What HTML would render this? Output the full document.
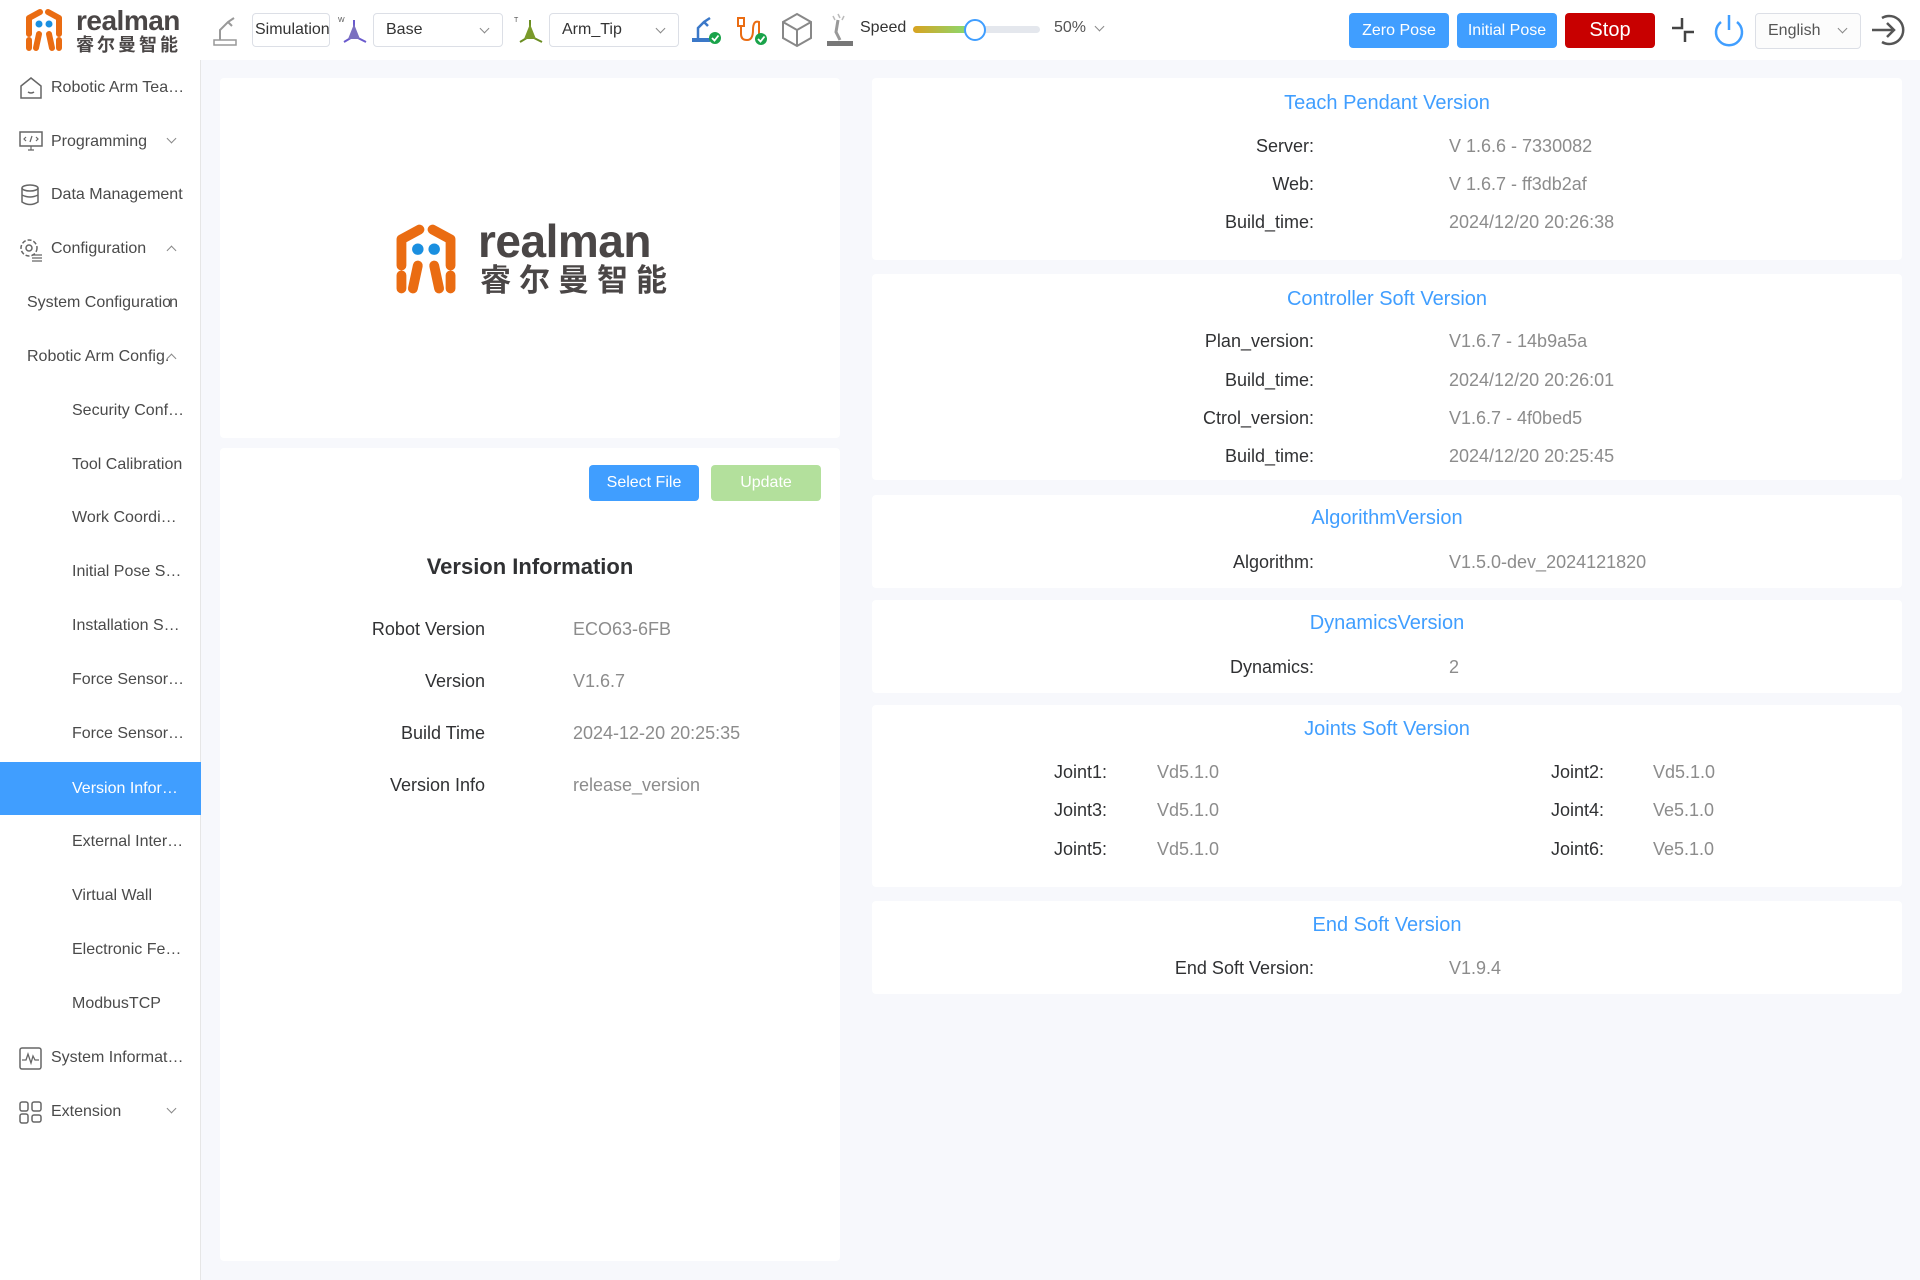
<!DOCTYPE html>
<html><head><meta charset="utf-8">
<style>
*{margin:0;padding:0;box-sizing:border-box}
body{width:1920px;height:1280px;background:#f7f8fc;font-family:"Liberation Sans","Noto Sans CJK SC",sans-serif;position:relative;overflow:hidden;color:#303133}
.a{position:absolute}
.hdr{left:0;top:0;width:1920px;height:60px;background:#fff}
.side{left:0;top:60px;width:201px;height:1220px;background:#fff;border-right:1px solid #e6e6e6}
.si{position:absolute;left:0;width:200px;height:53px;line-height:53px;font-size:16px;color:#4a4a4a;white-space:nowrap}
.card{position:absolute;background:#fff;border-radius:4px}
.t{position:absolute;left:0;right:0;text-align:center;color:#409eff;font-size:20px}
.l{position:absolute;text-align:right;font-size:18px;color:#303133;white-space:nowrap}
.v{position:absolute;font-size:18px;color:#8c8c8c;white-space:nowrap}
.btn{position:absolute;color:#fff;font-size:16px;text-align:center;border-radius:4px}
.chev{display:inline-block;width:7px;height:7px;border-right:1.3px solid #888;border-bottom:1.3px solid #888;transform:rotate(45deg)}
.chu{display:inline-block;width:7px;height:7px;border-left:1.3px solid #888;border-top:1.3px solid #888;transform:rotate(45deg)}
.sel{position:absolute;border:1px solid #dcdfe6;border-radius:4px;background:#fff;font-size:16px;color:#333;line-height:32px;padding-left:12px}
</style></head><body>
<div class="a hdr"></div>
<!-- logo -->
<svg class="a" style="left:22px;top:8px" width="44" height="44" viewBox="0 0 44 44">
<path d="M18 4 L7 10 V26 M26 4 L37 10 V26" stroke="#ea6c12" stroke-width="6" fill="none" stroke-linecap="round" stroke-linejoin="round"/>
<path d="M7 32 V40 M37 32 V40 M17 26 L14 40 M27 26 L30 40" stroke="#ea6c12" stroke-width="6" fill="none" stroke-linecap="round"/>
<circle cx="17" cy="16" r="3.5" fill="#1a8fe0"/><circle cx="27" cy="16" r="3.5" fill="#1a8fe0"/>
</svg>
<div class="a" style="left:76px;top:5px;font-size:28px;color:#4a4646;letter-spacing:-0.5px;font-weight:600">realman</div>
<div class="a" style="left:76px;top:31px;font-size:18px;font-weight:bold;color:#4a4646;letter-spacing:3px;font-family:'Noto Sans CJK SC',sans-serif">睿尔曼智能</div>
<!-- toolbar -->
<svg class="a" style="left:212px;top:14px" width="28" height="32" viewBox="0 0 28 32"><path d="M8 26 V16 L16 8 L22 4 M16 8 L20 12" stroke="#999" stroke-width="2" fill="none"/><rect x="2" y="26" width="22" height="5" fill="none" stroke="#999" stroke-width="1.5"/></svg>
<div class="sel" style="left:252px;top:13px;width:78px;height:34px;padding-left:2px;font-size:16px">Simulation</div>
<svg class="a" style="left:338px;top:14px" width="32" height="30"><text x="0" y="8" font-size="7" fill="#555">W</text><path d="M16 6 V22 L6 28 M16 22 L28 28" stroke="#6a5acd" stroke-width="2" fill="none"/><path d="M10 25 L16 10 L22 25Z" fill="#7b70c0"/></svg>
<div class="sel" style="left:373px;top:13px;width:130px;height:34px">Base<span class="chev" style="position:absolute;right:14px;top:11px"></span></div>
<svg class="a" style="left:514px;top:14px" width="32" height="30"><text x="0" y="8" font-size="7" fill="#555">T</text><path d="M16 6 V22 L6 28 M16 22 L28 28" stroke="#6b8e23" stroke-width="2" fill="none"/><path d="M10 25 L16 10 L22 25Z" fill="#7a9a2a"/></svg>
<div class="sel" style="left:549px;top:13px;width:130px;height:34px">Arm_Tip<span class="chev" style="position:absolute;right:14px;top:11px"></span></div>
<svg class="a" style="left:690px;top:14px" width="34" height="32"><path d="M8 24 V14 L14 8 L20 4 M14 8 L18 12" stroke="#3b78c8" stroke-width="2.5" fill="none"/><rect x="2" y="24" width="18" height="4" fill="#3b78c8"/><circle cx="25" cy="24" r="6" fill="#1aa34a"/><path d="M22 24 L24.5 26.5 L28.5 21.5" stroke="#fff" stroke-width="1.8" fill="none"/></svg>
<svg class="a" style="left:735px;top:14px" width="34" height="32"><path d="M3 4 H9 V12 H3Z M6 12 V20 Q6 26 12 26 Q18 26 18 16 Q18 6 24 8 V22" stroke="#ea6c12" stroke-width="2" fill="none"/><circle cx="26" cy="25" r="6" fill="#1aa34a"/><path d="M23 25 L25.5 27.5 L29.5 22.5" stroke="#fff" stroke-width="1.8" fill="none"/></svg>
<svg class="a" style="left:780px;top:12px" width="34" height="36"><path d="M17 2 L31 10 V26 L17 34 L3 26 V10Z M3 10 L17 18 L31 10 M17 18 V34" stroke="#888" stroke-width="2" fill="none"/></svg>
<svg class="a" style="left:824px;top:12px" width="32" height="36"><path d="M14 8 L12 20 L16 28" stroke="#999" stroke-width="3" fill="none"/><path d="M14 2 L16 6 M20 4 L18 8 M9 4 L11 8" stroke="#bbb" stroke-width="1.5"/><rect x="3" y="29" width="26" height="5" fill="#777"/></svg>
<div class="a" style="left:860px;top:19px;font-size:16px;color:#333">Speed</div>
<div class="a" style="left:913px;top:26px;width:127px;height:7px;border-radius:4px;background:#e4e7ed"></div>
<div class="a" style="left:913px;top:26px;width:62px;height:7px;border-radius:4px;background:linear-gradient(90deg,#d9a320,#7ee07a)"></div>
<div class="a" style="left:964px;top:19px;width:22px;height:22px;border-radius:50%;border:2px solid #409eff;background:#fff"></div>
<div class="a" style="left:1054px;top:19px;font-size:16px;color:#555">50%</div>
<span class="chev a" style="left:1096px;top:23px"></span>
<div class="btn" style="left:1349px;top:13px;width:100px;height:35px;line-height:35px;background:#409eff">Zero Pose</div>
<div class="btn" style="left:1457px;top:13px;width:100px;height:35px;line-height:35px;background:#409eff">Initial Pose</div>
<div class="btn" style="left:1565px;top:13px;width:90px;height:35px;line-height:35px;background:#c80000;font-size:20px">Stop</div>
<svg class="a" style="left:1668px;top:14px" width="30" height="32"><path d="M14 4 V14 H4 M17 28 V18 H26" stroke="#444" stroke-width="2.5" fill="none"/></svg>
<svg class="a" style="left:1711px;top:12px" width="36" height="38"><path d="M10 10 A13 13 0 1 0 26 10" stroke="#409eff" stroke-width="2.5" fill="none"/><path d="M18 3 V18" stroke="#409eff" stroke-width="2.5"/></svg>
<div class="sel" style="left:1755px;top:13px;width:106px;height:36px;line-height:34px;background:#fcfcfc;color:#555">English<span class="chev" style="position:absolute;right:14px;top:11px"></span></div>
<svg class="a" style="left:1868px;top:10px" width="40" height="40"><path d="M14 8 A14 14 0 1 1 14 32" stroke="#555" stroke-width="2.5" fill="none"/><path d="M4 20 H26 M19 13 L26 20 L19 27" stroke="#555" stroke-width="2.5" fill="none"/></svg>

<!-- sidebar -->
<div class="a side"></div>
<div class="si" style="top:61px;padding-left:51px">Robotic Arm Tea…</div>
<svg class="a" style="left:19px;top:76px" width="24" height="24"><path d="M2 10 L12 2 L22 10 V22 H2Z M9 16 Q12 18 15 16" stroke="#666" stroke-width="1.5" fill="none"/></svg>
<div class="si" style="top:115px;padding-left:51px">Programming<span class="chev" style="position:absolute;left:168px;top:20px"></span></div>
<svg class="a" style="left:19px;top:130px" width="24" height="24"><rect x="1" y="2" width="22" height="14" stroke="#666" stroke-width="1.5" fill="none"/><path d="M9 20 H15 M12 16 V20 M7 7 L5 9 L7 11 M17 7 L19 9 L17 11 M13 6 L11 12" stroke="#666" stroke-width="1.2" fill="none"/></svg>
<div class="si" style="top:168px;padding-left:51px">Data Management</div>
<svg class="a" style="left:19px;top:183px" width="24" height="24"><ellipse cx="11" cy="5" rx="8" ry="3" stroke="#666" stroke-width="1.5" fill="none"/><path d="M3 5 V19 Q11 24 19 19 V5 M3 12 Q11 16 19 12" stroke="#666" stroke-width="1.5" fill="none"/></svg>
<div class="si" style="top:222px;padding-left:51px">Configuration<span class="chu" style="position:absolute;left:168px;top:25px"></span></div>
<svg class="a" style="left:18px;top:237px" width="26" height="26"><circle cx="11" cy="11" r="8" stroke="#666" stroke-width="1.5" fill="none" stroke-dasharray="4 2"/><circle cx="11" cy="11" r="3" stroke="#666" stroke-width="1.5" fill="none"/><path d="M14 18 H24 M14 21 H24 M14 24 H24" stroke="#666" stroke-width="1.3"/></svg>
<div class="si" style="top:276px;padding-left:27px">System Configuratio<span style="margin-left:-2px">n</span></div>
<div class="si" style="top:330px;padding-left:27px">Robotic Arm Config.<span class="chu" style="position:absolute;left:168px;top:25px"></span></div>
<div class="si" style="top:384px;padding-left:72px">Security Conf…</div>
<div class="si" style="top:438px;padding-left:72px">Tool Calibration</div>
<div class="si" style="top:491px;padding-left:72px">Work Coordi…</div>
<div class="si" style="top:545px;padding-left:72px">Initial Pose S…</div>
<div class="si" style="top:599px;padding-left:72px">Installation S…</div>
<div class="si" style="top:653px;padding-left:72px">Force Sensor…</div>
<div class="si" style="top:707px;padding-left:72px">Force Sensor…</div>
<div class="si" style="top:762px;height:53px;padding-left:72px;background:#409eff;color:#fff;width:201px">Version Infor…</div>
<div class="si" style="top:815px;padding-left:72px">External Inter…</div>
<div class="si" style="top:869px;padding-left:72px">Virtual Wall</div>
<div class="si" style="top:923px;padding-left:72px">Electronic Fe…</div>
<div class="si" style="top:977px;padding-left:72px">ModbusTCP</div>
<div class="si" style="top:1031px;padding-left:51px">System Informat…</div>
<svg class="a" style="left:19px;top:1047px" width="24" height="24"><rect x="1" y="1" width="21" height="21" rx="2" stroke="#666" stroke-width="1.5" fill="none"/><path d="M3 13 L7 13 L9 7 L12 16 L14 9 L16 13 L20 13" stroke="#666" stroke-width="1.3" fill="none"/></svg>
<div class="si" style="top:1085px;padding-left:51px">Extension<span class="chev" style="position:absolute;left:168px;top:20px"></span></div>
<svg class="a" style="left:19px;top:1101px" width="24" height="24"><rect x="1" y="1" width="8" height="9" rx="2" stroke="#666" stroke-width="1.5" fill="none"/><rect x="13" y="1" width="9" height="9" rx="2" stroke="#666" stroke-width="1.5" fill="none"/><rect x="1" y="13" width="8" height="9" rx="2" stroke="#666" stroke-width="1.5" fill="none"/><rect x="13" y="14" width="9" height="7" rx="2" stroke="#666" stroke-width="1.5" fill="none"/></svg>

<!-- left cards -->
<div class="card" style="left:220px;top:78px;width:620px;height:360px"></div>
<svg class="a" style="left:390px;top:222px" width="72" height="74" viewBox="0 0 44 44">
<path d="M18 4 L7 10 V26 M26 4 L37 10 V26" stroke="#ea6c12" stroke-width="6" fill="none" stroke-linecap="round" stroke-linejoin="round"/>
<path d="M7 32 V40 M37 32 V40 M17 26 L14 40 M27 26 L30 40" stroke="#ea6c12" stroke-width="6" fill="none" stroke-linecap="round"/>
<circle cx="17" cy="16" r="3.5" fill="#1a8fe0"/><circle cx="27" cy="16" r="3.5" fill="#1a8fe0"/>
</svg>
<div class="a" style="left:478px;top:214px;font-size:46px;font-weight:600;color:#4a4646;letter-spacing:-0.5px">realman</div>
<div class="a" style="left:480px;top:258px;font-size:31px;font-weight:bold;color:#4a4646;letter-spacing:8px;font-family:'Noto Sans CJK SC',sans-serif;line-height:40px">睿尔曼智能</div>

<div class="card" style="left:220px;top:448px;width:620px;height:813px"></div>
<div class="btn" style="left:589px;top:465px;width:110px;height:36px;line-height:36px;background:#409eff">Select File</div>
<div class="btn" style="left:711px;top:465px;width:110px;height:36px;line-height:36px;background:#b3e09c">Update</div>
<div class="a" style="left:220px;width:620px;top:554px;text-align:center;font-size:22px;font-weight:bold;color:#303133">Version Information</div>
<div class="l" style="right:1435px;top:619px">Robot Version</div><div class="v" style="left:573px;top:619px">ECO63-6FB</div>
<div class="l" style="right:1435px;top:671px">Version</div><div class="v" style="left:573px;top:671px">V1.6.7</div>
<div class="l" style="right:1435px;top:723px">Build Time</div><div class="v" style="left:573px;top:723px">2024-12-20 20:25:35</div>
<div class="l" style="right:1435px;top:775px">Version Info</div><div class="v" style="left:573px;top:775px">release_version</div>

<!-- right cards -->
<div class="card" style="left:872px;top:78px;width:1030px;height:182px">
<div class="t" style="top:14px">Teach Pendant Version</div>
<div class="l" style="right:588px;top:58px">Server:</div><div class="v" style="left:577px;top:58px">V 1.6.6 - 7330082</div>
<div class="l" style="right:588px;top:96px">Web:</div><div class="v" style="left:577px;top:96px">V 1.6.7 - ff3db2af</div>
<div class="l" style="right:588px;top:134px">Build_time:</div><div class="v" style="left:577px;top:134px">2024/12/20 20:26:38</div>
</div>
<div class="card" style="left:872px;top:274px;width:1030px;height:206px">
<div class="t" style="top:14px">Controller Soft Version</div>
<div class="l" style="right:588px;top:57px">Plan_version:</div><div class="v" style="left:577px;top:57px">V1.6.7 - 14b9a5a</div>
<div class="l" style="right:588px;top:96px">Build_time:</div><div class="v" style="left:577px;top:96px">2024/12/20 20:26:01</div>
<div class="l" style="right:588px;top:134px">Ctrol_version:</div><div class="v" style="left:577px;top:134px">V1.6.7 - 4f0bed5</div>
<div class="l" style="right:588px;top:172px">Build_time:</div><div class="v" style="left:577px;top:172px">2024/12/20 20:25:45</div>
</div>
<div class="card" style="left:872px;top:495px;width:1030px;height:93px">
<div class="t" style="top:12px">AlgorithmVersion</div>
<div class="l" style="right:588px;top:57px">Algorithm:</div><div class="v" style="left:577px;top:57px">V1.5.0-dev_2024121820</div>
</div>
<div class="card" style="left:872px;top:600px;width:1030px;height:93px">
<div class="t" style="top:12px">DynamicsVersion</div>
<div class="l" style="right:588px;top:57px">Dynamics:</div><div class="v" style="left:577px;top:57px">2</div>
</div>
<div class="card" style="left:872px;top:705px;width:1030px;height:182px">
<div class="t" style="top:13px">Joints Soft Version</div>
<div class="l" style="left:182px;top:57px">Joint1:</div><div class="v" style="left:285px;top:57px">Vd5.1.0</div>
<div class="l" style="left:679px;top:57px">Joint2:</div><div class="v" style="left:781px;top:57px">Vd5.1.0</div>
<div class="l" style="left:182px;top:95px">Joint3:</div><div class="v" style="left:285px;top:95px">Vd5.1.0</div>
<div class="l" style="left:679px;top:95px">Joint4:</div><div class="v" style="left:781px;top:95px">Ve5.1.0</div>
<div class="l" style="left:182px;top:134px">Joint5:</div><div class="v" style="left:285px;top:134px">Vd5.1.0</div>
<div class="l" style="left:679px;top:134px">Joint6:</div><div class="v" style="left:781px;top:134px">Ve5.1.0</div>
</div>
<div class="card" style="left:872px;top:901px;width:1030px;height:93px">
<div class="t" style="top:13px">End Soft Version</div>
<div class="l" style="right:588px;top:57px">End Soft Version:</div><div class="v" style="left:577px;top:57px">V1.9.4</div>
</div>
</body></html>
